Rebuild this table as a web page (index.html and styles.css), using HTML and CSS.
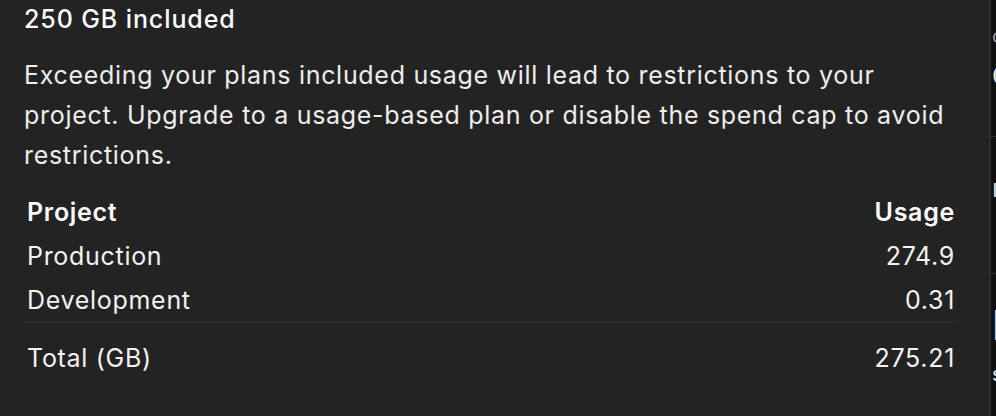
FILE: index.html
```html
<!DOCTYPE html>
<html lang="en">
<head>
<meta charset="utf-8">
<title>Usage</title>
<link rel="stylesheet" href="styles.css">
</head>
<body>
<div class="screen">
  <div class="popover">
    <h3 class="title">250 GB included</h3>
    <p class="desc">Exceeding your plans included usage will lead to restrictions to your project. Upgrade to a usage-based plan or disable the spend cap to avoid restrictions.</p>
    <table class="usage">
      <thead>
        <tr><th class="name">Project</th><th class="num">Usage</th></tr>
      </thead>
      <tbody>
        <tr><td class="name">Production</td><td class="num">274.9</td></tr>
        <tr class="last"><td class="name">Development</td><td class="num">0.31</td></tr>
      </tbody>
      <tfoot>
        <tr><td class="name">Total (GB)</td><td class="num">275.21</td></tr>
      </tfoot>
    </table>
  </div>
  <div class="behind">
    <div class="b1">cost</div>
    <div class="b2">Compute</div>
    <div class="b3">rate</div>
    <div class="b4">|</div>
    <div class="b5">s</div>
  </div>
</div>
</body>
</html>
```
FILE: styles.css
```css
* { box-sizing: border-box; }
html, body { margin: 0; padding: 0; }
body {
  background: #111111;
  font-family: Inter, "Noto Sans", sans-serif;
  color: #ededed;
}
.screen {
  display: flex;
  width: 996px;
  height: 416px;
  overflow: hidden;
}
.popover {
  width: 991px;
  flex: none;
  background: #232323;
  border-right: 2px solid #2e2e2e;
  padding: 0 33px 0 24px;
  font-size: 25px;
  letter-spacing: 0.7px;
}
.title {
  margin: 0;
  font-size: 25px;
  line-height: 38px;
  font-weight: 500;
  letter-spacing: 0.9px;
  color: #fafafa;
}
.desc {
  margin: 17px 0 0;
  line-height: 40px;
  font-weight: 400;
  color: #ededed;
}
.usage {
  width: calc(100% - 1px);
  margin: 15px 0 0 1px;
  border-collapse: collapse;
  font-size: 25px;
  line-height: 44px;
}
.usage th, .usage td {
  padding: 0;
  height: 44px;
  color: #f2f2f2;
}
.usage th { font-weight: 600; color: #fafafa; }
.usage td { font-weight: 400; }
.usage .name { text-align: left; padding-left: 2px; }
.usage .num { text-align: right; padding-right: 1px; }
.usage tr.last td { border-bottom: 1px solid #333333; }
.usage tfoot td { padding-top: 13px; height: 57px; vertical-align: top; }

.behind {
  flex: 1;
  background: #111111;
  overflow: hidden;
  font-size: 25px;
  white-space: nowrap;
  color: #e6e6e6;
}
.behind > div { padding-left: 1px; }
.b1 { margin-top: 24px; color: #9a9a9a; font-size: 20px; line-height: 24px; }
.b2 { margin-top: 8px; line-height: 40px; padding-bottom: 40px; border-bottom: 1px solid #2e2e2e; }
.b3 { margin-top: 36px; line-height: 30px; color: #cfcfcf; padding-bottom: 70px; border-bottom: 1px solid #2e2e2e; }
.b4 { margin-top: 36px; line-height: 30px; padding-left: 4px; }
.b5 { margin-top: 22px; line-height: 24px; padding-left: 3px; font-size: 20px; }
```
